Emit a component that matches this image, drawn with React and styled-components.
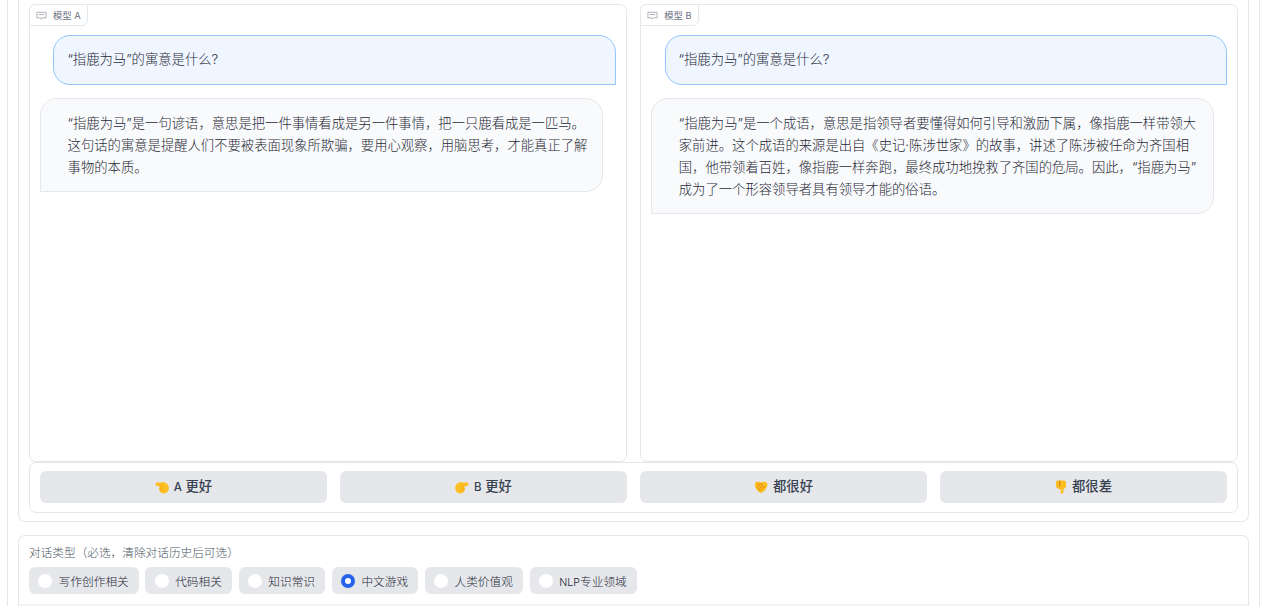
import React from "react";
import styled, { createGlobalStyle } from "styled-components";

const Global = createGlobalStyle`
  html, body { margin: 0; padding: 0; background: #fff; overflow: hidden; }
  body { font-family: Inter, "Noto Sans CJK SC", sans-serif; color: #374151; }
  * { box-sizing: border-box; }
`;
const Viewport = styled.div`height: 606px; overflow: hidden;`;
const Frame = styled.div`
  margin-left: 7px; width: 1253px; height: 606px; padding: 0 10px;
  border-left: 1px solid #e5e7eb; border-right: 1px solid #e5e7eb;
`;
const TopPanel = styled.section`
  height: 522px; padding: 4px 10px 8px; background: #fff;
  border: 1px solid #e5e7eb; border-top: 0; border-radius: 0 0 7px 7px;
`;
const Columns = styled.div`display: grid; grid-template-columns: 597.8px 597.8px; gap: 13.4px;`;
const ChatBox = styled.div`
  position: relative; height: 458px; padding: 30px 10px 0;
  border: 1px solid #e5e7eb; border-radius: 7px;
`;
const Tab = styled.div`
  position: absolute; left: -1px; top: -1px; height: 22px; padding: 0 6px;
  display: flex; align-items: center; gap: 6px; font-size: 9.33px; color: #6b7280;
  border: 1px solid #e5e7eb; border-radius: 0 0 6px 0; border-top-left-radius: 6px; background: #fff;
`;
const UserBubble = styled.div`
  width: 562.5px; margin-left: 13.4px; height: 50px; padding: 12px 13px;
  background: #eff6ff; border: 1px solid #93c5fd; font-weight: 300; color: #1f2937;
  border-radius: 17px 17px 0 17px; font-size: 13.33px; line-height: 22px;
`;
const BotBubble = styled.div`
  width: 563px; margin-top: 13px; padding: 13px 11px 13px 26.6px; font-weight: 300; color: #1f2937;
  background: #f9fafb; border: 1px solid #e5e7eb;
  border-radius: 17px 17px 17px 0; font-size: 13.33px; line-height: 22px;
`;
const VoteBar = styled.div`
  height: 51px; padding: 8px 10px; display: grid;
  grid-template-columns: repeat(4, 287px); gap: 13px;
  border: 1px solid #e5e7eb; border-radius: 7px;
`;
const VoteButton = styled.button`
  height: 32px; border: 0; border-radius: 6px; background: #e5e7eb; color: #374151;
  display: flex; align-items: center; justify-content: center; gap: 5px;
  font: 500 13.33px Inter, "Noto Sans CJK SC", sans-serif; padding: 0 0 3px;
`;
const VoteIcon = styled.svg`margin-top: 3px; flex: none;`;
const Latin = styled.span`font-size: ${p => p.$size}px;`;
const Category = styled.section`
  margin-top: 13px; height: 80px; position: relative; padding: 9px 10px;
  border: 1px solid #e5e7eb; border-bottom: 0; border-radius: 7px 7px 0 0; overflow: hidden;
`;
const Caption = styled.div`font-size: 11.67px; line-height: 16px; color: #4b5563; font-weight: 300;`;
const Options = styled.div`display: flex; gap: 6.7px; margin-top: 6px;`;
const Option = styled.label`
  height: 27px; display: flex; align-items: center; gap: 6.4px; padding: 0 10px 0 9.4px;
  border-radius: 6px; background: #e5e7eb; font-size: 11.67px; color: #1f2937; font-weight: 300;
`;
const Radio = styled.span`
  width: 14px; height: 14px; border-radius: 50%; background: #fff;
  border: ${p => (p.$on ? "4.5px solid #2563eb" : "0")};
`;
const FooterStrip = styled.div`
  position: absolute; left: 0; right: 0; top: 68px; height: 4px; background: #f3f4f6;
`;

const ChatIcon = () => (
  <svg width="11" height="11" viewBox="0 0 12 12" fill="none" stroke="#9ca3af" strokeWidth="0.9">
    <path d="M1 2.5h10v6H7L5.5 10 5 8.5H1z" />
    <path d="M3 5h6" />
  </svg>
);
const Point = ({ flip }) => (
  <VoteIcon width="14" height="14" viewBox="0 0 15 15" style={flip ? { transform: "scaleX(-1)" } : undefined}>
    <path d="M.6 4.6C.6 3.4 1.4 2.8 2.4 2.8H6.4C8 1.8 10.2 2.2 11.4 3.2 13.2 3.6 14.8 5.8 14.8 8.4 14.8 12 12.6 14.4 9.8 14.4 7.6 14.4 5.6 13.4 5 11.8 4.4 10.6 4.4 9.4 4.8 8.6 4.6 7.8 4.6 7 4.8 6.4H2.4C1.4 6.4.6 5.8.6 4.6Z" fill="#fbbf24" />
    <path d="M4.8 6.4H7.8M4.7 8.8H8.2M5.2 11.2H8" stroke="#f59e0b" strokeWidth="0.9" fill="none" />
  </VoteIcon>
);
const Clap = () => (
  <VoteIcon width="14" height="14" viewBox="0 0 14 14">
    <path d="M1 3.2C2.2 1.6 4.6 1.4 6.6 2.6 8.6 1.4 11.6 1.5 13 3 14 5 13.2 7.6 11 10 9.6 11.6 8.2 13 7 13 5.6 13 3.8 11.4 2.6 9.6 1.2 7.6 0.2 5 1 3.2Z" fill="#fbbf24" />
    <path d="M3.6 3.4 8.6 9.4M6 2.8 10.6 8M3 6.4 6.6 11" stroke="#d97706" strokeWidth="0.9" fill="none" />
  </VoteIcon>
);
const ThumbDown = () => (
  <VoteIcon width="12" height="14" viewBox="0 0 12 14">
    <path d="M1 2C1 1 1.8.5 2.6.5H9C10.4.5 11 1.4 11 3V6.2C11 7.6 9.6 8.6 8.4 9V12.4C8.4 13.2 7.8 13.6 7 13.6S5.6 13.2 5.6 12.4V9.4C3.4 9.2 1 8 1 6Z" fill="#fbbf24" />
    <path d="M4.8.6V6.6" stroke="#d97706" strokeWidth="1" fill="none" />
  </VoteIcon>
);

const question = "“指鹿为马”的寓意是什么?";
const panes = [
  { label: "模型 A", answer: "“指鹿为马”是一句谚语，意思是把一件事情看成是另一件事情，把一只鹿看成是一匹马。这句话的寓意是提醒人们不要被表面现象所欺骗，要用心观察，用脑思考，才能真正了解事物的本质。" },
  { label: "模型 B", answer: "“指鹿为马”是一个成语，意思是指领导者要懂得如何引导和激励下属，像指鹿一样带领大家前进。这个成语的来源是出自《史记·陈涉世家》的故事，讲述了陈涉被任命为齐国相国，他带领着百姓，像指鹿一样奔跑，最终成功地挽救了齐国的危局。因此，“指鹿为马”\u200b成为了一个形容领导者具有领导才能的俗语。" },
];
const options = ["写作创作相关", "代码相关", "知识常识", "中文游戏", "人类价值观"];

export default function App() {
  return (
    <Viewport>
      <Global />
      <Frame>
        <TopPanel>
          <Columns>
            {panes.map(p => (
              <ChatBox key={p.label}>
                <Tab><ChatIcon />{p.label}</Tab>
                <UserBubble>{question}</UserBubble>
                <BotBubble>{p.answer}</BotBubble>
              </ChatBox>
            ))}
          </Columns>
          <VoteBar>
            <VoteButton><Point /><span><Latin $size={11.5}>A</Latin> 更好</span></VoteButton>
            <VoteButton><Point flip /><span><Latin $size={11.5}>B</Latin> 更好</span></VoteButton>
            <VoteButton><Clap />都很好</VoteButton>
            <VoteButton><ThumbDown />都很差</VoteButton>
          </VoteBar>
        </TopPanel>
        <Category>
          <Caption>对话类型（必选，清除对话历史后可选）</Caption>
          <Options>
            {options.map(o => (
              <Option key={o}><Radio $on={o === "中文游戏"} />{o}</Option>
            ))}
            <Option><Radio /><span><Latin $size={10.6}>NLP</Latin>专业领域</span></Option>
          </Options>
          <FooterStrip />
        </Category>
      </Frame>
    </Viewport>
  );
}
